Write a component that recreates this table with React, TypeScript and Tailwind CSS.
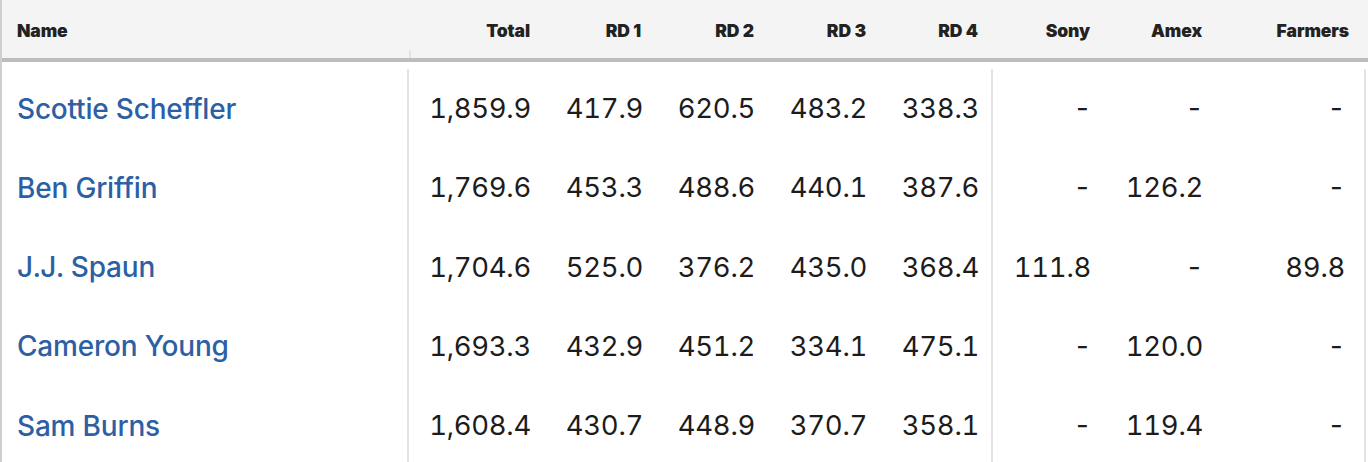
const rows = [
  { name: 'Scottie Scheffler', total: '1,859.9', rd: ['417.9', '620.5', '483.2', '338.3'], sony: '-', amex: '-', farmers: '-' },
  { name: 'Ben Griffin', total: '1,769.6', rd: ['453.3', '488.6', '440.1', '387.6'], sony: '-', amex: '126.2', farmers: '-' },
  { name: 'J.J. Spaun', total: '1,704.6', rd: ['525.0', '376.2', '435.0', '368.4'], sony: '111.8', amex: '-', farmers: '89.8' },
  { name: 'Cameron Young', total: '1,693.3', rd: ['432.9', '451.2', '334.1', '475.1'], sony: '-', amex: '120.0', farmers: '-' },
  { name: 'Sam Burns', total: '1,608.4', rd: ['430.7', '448.9', '370.7', '358.1'], sony: '-', amex: '119.4', farmers: '-' },
];

const cols = 'grid grid-cols-[407px_136px_112px_112px_112px_112px_112px_112px_1fr]';
const inter = { fontFamily: '"Inter", "Liberation Sans", sans-serif' };

export default function App() {
  return (
    <div className="w-[1368px] h-[462px] overflow-hidden bg-white border-l-2 border-[#cfcfcf]">
      <div className={`${cols} h-[58px] bg-[#f4f4f4] items-center text-[17.5px] font-black text-[#222] tracking-[-0.1px]`} style={inter}>
        <div className="relative h-full flex items-center pl-[15px] pt-[4px]">
          Name
          <span className="absolute right-[-2px] bottom-0 h-[8px] w-[2px] bg-[#e4e4e4]" />
        </div>
        <div className="text-right pr-[15px] pt-[4px]">Total</div>
        <div className="text-right pr-[16px] pt-[4px]">RD 1</div>
        <div className="text-right pr-[15px] pt-[4px]">RD 2</div>
        <div className="text-right pr-[15px] pt-[4px]">RD 3</div>
        <div className="text-right pr-[15px] pt-[4px]">RD 4</div>
        <div className="text-right pr-[15px] pt-[4px]">Sony</div>
        <div className="text-right pr-[15px] pt-[4px]">Amex</div>
        <div className="text-right pr-[19px] pt-[4px]">Farmers</div>
      </div>
      <div className="h-[6px] border-t-[4px] border-[#bdbdbd] box-content" />
      <div className="flex flex-col pt-[1px]">
        {rows.map((r) => (
          <div key={r.name} className={`${cols} h-[79.25px] items-center text-[27.5px] text-[#1c1c1c] tracking-[-0.3px] tabular-nums`} style={inter}>
            <div className="h-full flex items-center pl-[15px] border-r-2 border-[#e4e4e4] text-[#2d5fa5] font-medium text-[28px] tracking-[-0.2px]">
              {r.name}
            </div>
            <div className="text-right pr-[14px]">{r.total}</div>
            {r.rd.map((v, i) => (
              <div key={i} className="text-right pr-[14px]">{v}</div>
            ))}
            <div className="h-full flex items-center justify-end pr-[14px] border-l-2 border-[#e4e4e4] -ml-[2px]">{r.sony}</div>
            <div className="text-right pr-[14px]">{r.amex}</div>
            <div className="h-full flex items-center justify-end pr-[19px] border-r-2 border-[#e4e4e4] mr-[2px]">{r.farmers}</div>
          </div>
        ))}
      </div>
    </div>
  );
}
